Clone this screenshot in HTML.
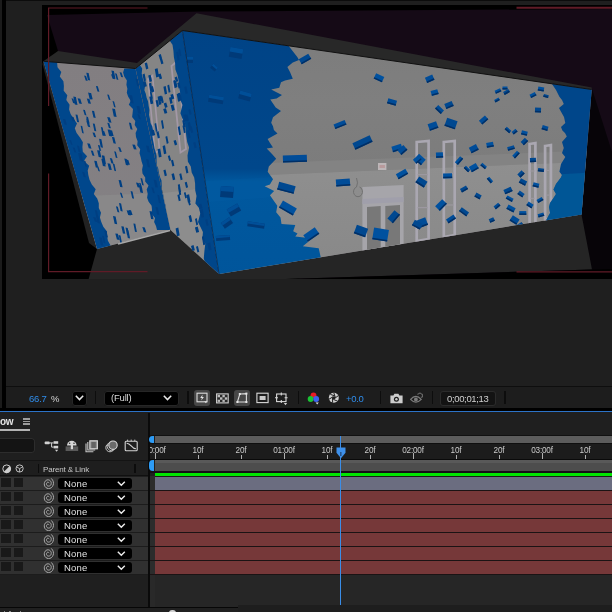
<!DOCTYPE html>
<html><head><meta charset="utf-8"><title>AE</title>
<style>
html,body{margin:0;padding:0;background:#1f1f1f;}
html{overflow:hidden;width:612px;height:612px;}
body{width:612px;height:612px;overflow:hidden;position:relative;font-family:"Liberation Sans",sans-serif;}
.abs{position:absolute;}
.txt{font-family:"Liberation Sans",sans-serif;line-height:1.15;white-space:nowrap;will-change:transform;}
.dd{background:#000;border-radius:3px;box-shadow:inset 0 0 0 1px #262626;}
.sep{width:1.3px;background:#0d0d0d;}
</style></head><body>
<div style="position:absolute;left:0;top:0;width:612px;height:612px;overflow:hidden;background:#1f1f1f">
<svg width="612" height="386" viewBox="0 0 612 386" style="position:absolute;left:0;top:0">
<defs>
<linearGradient id="gw" x1="0" y1="0" x2="0" y2="1"><stop offset="0" stop-color="#7c7c7c"/><stop offset="0.3" stop-color="#7f7f7f"/><stop offset="0.56" stop-color="#7c7c7c"/><stop offset="1" stop-color="#7c7c7c"/></linearGradient>
<linearGradient id="gl" x1="0" y1="0" x2="0" y2="1"><stop offset="0" stop-color="#8f8f8f"/><stop offset="1" stop-color="#878787"/></linearGradient>
<linearGradient id="bl" x1="0" y1="0" x2="0" y2="1"><stop offset="0" stop-color="#004386"/><stop offset="0.55" stop-color="#00478b"/><stop offset="0.60" stop-color="#00589e"/><stop offset="1" stop-color="#00559b"/></linearGradient>
<linearGradient id="lw" x1="0" y1="0" x2="0" y2="1"><stop offset="0" stop-color="#827e81"/><stop offset="1" stop-color="#848184"/></linearGradient>
<clipPath id="cfw"><polygon points="182.4,30.5 591.7,89.5 581.5,214.5 219.0,274.0"/></clipPath>
<clipPath id="ccomp"><rect x="42" y="5" width="570" height="274"/></clipPath>
</defs>
<rect x="0" y="0" width="612" height="386" fill="#1f1f1f"/>
<rect x="0" y="0" width="612" height="1" fill="#0c0c0c"/>
<rect x="0" y="0" width="2" height="386" fill="#1b1b1b"/>
<rect x="2" y="0" width="4" height="386" fill="#000"/>
<rect x="42" y="5" width="570" height="274" fill="#000"/>
<g clip-path="url(#ccomp)">
<polygon points="47.0,15.0 200.0,11.5 612.0,9.0 612.0,279.0 300.0,279.0 58.0,51.0" fill="#150a16"/>
<polygon points="591.7,88.0 612.0,152.0 612.0,279.0 575.0,279.0 581.0,214.0" fill="#070408"/>
<polygon points="97.0,249.0 88.5,279.5 270.0,279.5 592.0,269.5 581.5,214.5 219.0,274.0 170.5,230.0" fill="#252525"/>
<polygon points="260.0,280.0 270.0,279.5 592.0,269.5 612.0,269.0 612.0,281.0 260.0,281.0" fill="#000"/>
<polygon points="43.4,61.3 58.0,51.0 137.0,63.0 196.5,13.2 591.7,87.6 591.7,89.5 182.4,30.5 135.5,68.5" fill="#282828"/>
<polygon points="43.4,61.3 97.0,249.0 89.0,243.0 42.5,64.0" fill="#222222"/>
<polygon points="43.4,61.3 135.5,68.5 170.5,230.0 97.0,249.0" fill="url(#lw)"/>
<polygon points="135.5,68.5 182.4,30.5 219.0,274.0 170.5,230.0" fill="#858585"/>
<polygon points="82.0,196.0 163.0,193.0 170.5,230.0 97.0,249.0" fill="#8c8c8c" opacity="0.7"/>
<polygon points="163.0,193.0 206.0,188.0 219.0,274.0 170.5,230.0" fill="#909090" opacity="0.7"/>
<polygon points="148.0,79.0 152.5,75.5 159.5,150.0 155.0,153.0" fill="none" stroke="#a398a6" stroke-width="1.6"/>
<polygon points="171.5,66.0 177.5,61.0 186.0,149.0 180.5,152.5" fill="none" stroke="#a398a6" stroke-width="1.8"/>
<clipPath id="clw"><polygon points="43.4,61.3 135.5,68.5 170.5,230.0 97.0,249.0"/></clipPath>
<clipPath id="cmw"><polygon points="135.5,68.5 182.4,30.5 219.0,274.0 170.5,230.0"/></clipPath>
<polygon clip-path="url(#clw)" points="43.4,61.3 57.0,61.3 57.5,67.2 61.3,71.9 59.8,76.6 63.4,81.3 63.9,86.0 63.7,90.7 67.3,95.3 66.3,100.0 69.6,104.7 69.1,109.4 70.6,114.1 73.6,118.8 77.0,123.5 74.8,128.2 76.6,132.9 80.0,137.6 82.9,142.3 82.4,147.0 82.8,151.7 87.1,156.3 83.8,161.0 89.2,165.7 87.7,170.4 88.3,175.1 89.5,179.8 91.8,184.5 95.7,189.2 93.8,193.9 97.2,198.6 98.8,203.3 98.8,208.0 101.0,212.7 99.9,217.4 101.3,222.0 103.3,226.7 107.0,231.4 107.1,236.1 107.9,240.8 110.6,245.5 111.3,250.2 97.0,249.0" fill="#00478c"/>
<polygon clip-path="url(#clw)" points="135.5,68.5 170.5,230.0 157.0,230.0 156.0,226.0 154.1,221.9 155.0,217.9 151.6,213.8 152.0,209.8 151.6,205.8 148.6,201.7 147.1,197.7 147.7,193.7 146.7,189.6 148.5,185.6 145.2,181.6 145.2,177.5 142.5,173.5 142.1,169.4 142.9,165.4 141.6,161.4 140.7,157.3 139.5,153.3 140.2,149.2 137.2,145.2 137.6,141.2 136.0,137.1 135.6,133.1 137.3,129.1 134.7,125.0 135.3,121.0 132.1,116.9 132.6,112.9 133.0,108.9 128.8,104.8 130.7,100.8 128.2,96.8 126.8,92.7 127.4,88.7 126.4,84.7 126.9,80.6 124.3,76.6 123.1,72.5 124.3,68.5" fill="#00478c"/>
<polygon clip-path="url(#cmw)" points="135.5,68.5 140.1,65.3 142.2,68.4 141.7,73.5 142.6,77.5 143.6,81.4 145.2,84.9 144.4,90.2 145.8,93.8 146.7,97.9 148.1,101.6 148.6,105.8 149.4,109.9 149.0,114.9 149.9,118.8 150.5,123.1 152.3,126.5 153.1,130.6 152.2,135.9 153.0,140.0 153.8,144.1 154.5,148.2 155.7,152.0 156.6,156.0 156.6,160.7 156.8,165.2 158.3,168.8 158.9,173.0 160.0,176.9 161.5,180.5 161.7,185.0 162.0,189.4 162.9,193.4 163.8,197.5 164.4,201.7 165.6,205.5 166.1,209.8 167.0,213.8 167.9,217.9 168.8,221.9 169.6,226.0 170.5,230.0 170.5,230.0" fill="#00478c"/>
<polygon clip-path="url(#cmw)" points="182.4,30.5 219.0,274.0 210.0,280.8 209.4,274.4 206.8,269.6 205.2,264.0 203.8,258.3 204.4,251.0 205.3,243.7 202.4,239.0 202.9,231.9 200.5,226.9 198.0,222.0 200.3,213.5 198.8,207.8 195.4,203.6 196.5,196.1 195.2,190.2 195.1,183.6 194.2,177.5 191.7,172.5 190.8,166.4 187.9,161.8 187.5,155.4 189.1,147.4 187.2,142.0 186.3,136.0 185.6,129.7 185.0,123.4 182.4,118.6 180.4,113.3 182.5,104.9 180.3,99.8 180.2,93.1 179.1,87.2 178.6,80.7 177.5,74.9 175.4,69.6 175.1,63.1 173.9,57.2 173.4,50.8 172.5,44.7 169.4,40.2" fill="#00468a"/>
<path d="M115.9,206.3l1.9,0.4l1.6,5.8l-1.9,-0.4zM149.5,211.1l2.5,0.4l1.6,7.8l-2.5,-0.4zM83.8,160.6l1.6,0.4l1.6,5.9l-1.6,-0.4zM62.9,118.9l2.4,0.4l1.6,5.5l-2.4,-0.4zM83.1,109.7l1.8,0.4l1.6,5.3l-1.8,-0.4zM125.5,227.6l2.2,0.4l1.6,7.9l-2.2,-0.4zM128.6,209.9l2.4,0.4l1.6,4.8l-2.4,-0.4zM155.5,206.9l2.2,0.4l1.6,7.5l-2.2,-0.4zM94.9,210.1l2.1,0.4l1.6,8.4l-2.1,-0.4zM102.1,235.7l1.8,0.4l1.6,7.4l-1.8,-0.4zM73.3,96.5l2.6,0.4l1.6,8.1l-2.6,-0.4zM96.8,166.0l1.6,0.4l1.6,5.0l-1.6,-0.4zM115.3,233.4l2.6,0.4l1.6,6.2l-2.6,-0.4zM86.4,121.3l2.3,0.4l1.6,5.5l-2.3,-0.4zM87.2,143.3l2.7,0.4l1.6,5.0l-2.7,-0.4zM97.1,150.2l2.7,0.4l1.6,6.8l-2.7,-0.4zM104.2,230.6l2.2,0.4l1.6,6.5l-2.2,-0.4zM115.0,73.3l1.8,0.4l1.6,6.3l-1.8,-0.4zM78.1,152.9l2.3,0.4l1.6,7.4l-2.3,-0.4zM94.2,160.7l2.5,0.4l1.6,6.7l-2.5,-0.4zM86.1,118.5l2.2,0.4l1.6,7.6l-2.2,-0.4zM119.0,203.0l2.1,0.4l1.6,8.1l-2.1,-0.4zM124.3,158.5l2.4,0.4l1.6,6.5l-2.4,-0.4zM107.5,163.3l2.7,0.4l1.6,6.4l-2.7,-0.4zM133.4,223.4l1.9,0.4l1.6,8.3l-1.9,-0.4zM118.7,235.1l1.8,0.4l1.6,7.9l-1.8,-0.4zM72.8,147.4l1.9,0.4l1.6,4.8l-1.9,-0.4zM142.3,227.0l2.5,0.4l1.6,5.1l-2.5,-0.4zM129.3,95.0l2.8,0.4l1.6,8.0l-2.8,-0.4zM101.8,155.3l2.6,0.4l1.6,8.5l-2.6,-0.4zM77.0,145.5l2.0,0.4l1.6,6.6l-2.0,-0.4zM80.6,125.7l1.6,0.4l1.6,7.4l-1.6,-0.4zM118.2,147.1l2.0,0.4l1.6,4.6l-2.0,-0.4zM125.5,159.6l2.8,0.4l1.6,4.8l-2.8,-0.4zM71.0,116.5l2.5,0.4l1.6,4.7l-2.5,-0.4zM88.4,92.7l2.7,0.4l1.6,6.2l-2.7,-0.4zM119.9,192.6l1.7,0.4l1.6,4.9l-1.7,-0.4zM132.3,144.4l2.7,0.4l1.6,4.8l-2.7,-0.4zM126.6,210.3l2.6,0.4l1.6,4.8l-2.6,-0.4zM107.6,129.4l2.7,0.4l1.6,6.7l-2.7,-0.4zM88.1,92.6l1.9,0.4l1.6,6.6l-1.9,-0.4zM71.5,98.3l1.8,0.4l1.6,4.7l-1.8,-0.4zM92.8,123.4l1.9,0.4l1.6,7.5l-1.9,-0.4zM112.5,101.1l1.6,0.4l1.6,5.9l-1.6,-0.4zM86.3,72.7l2.3,0.4l1.6,7.4l-2.3,-0.4zM79.9,153.1l1.7,0.4l1.6,8.2l-1.7,-0.4zM146.0,145.6l2.6,0.4l1.6,6.5l-2.6,-0.4zM101.3,158.7l2.8,0.4l1.6,7.3l-2.8,-0.4zM96.0,215.7l2.4,0.4l1.6,7.3l-2.4,-0.4zM102.5,130.8l1.8,0.4l1.6,4.7l-1.8,-0.4zM86.8,98.6l2.6,0.4l1.6,4.8l-2.6,-0.4zM151.4,187.3l1.9,0.4l1.6,5.6l-1.9,-0.4zM90.8,150.4l2.1,0.4l1.6,5.1l-2.1,-0.4zM92.5,132.4l2.1,0.4l1.6,4.5l-2.1,-0.4zM109.8,158.0l2.2,0.4l1.6,5.3l-2.2,-0.4zM69.4,139.9l1.6,0.4l1.6,4.7l-1.6,-0.4zM91.9,110.7l2.2,0.4l1.6,6.8l-2.2,-0.4zM138.8,185.1l2.7,0.4l1.6,7.4l-2.7,-0.4zM100.9,127.1l1.8,0.4l1.6,8.4l-1.8,-0.4zM136.0,182.6l2.6,0.4l1.6,4.7l-2.6,-0.4zM153.7,179.8l2.6,0.4l1.6,7.4l-2.6,-0.4zM113.0,216.1l2.6,0.4l1.6,7.7l-2.6,-0.4zM121.3,226.2l2.4,0.4l1.6,7.2l-2.4,-0.4zM84.1,75.5l2.0,0.4l1.6,5.0l-2.0,-0.4zM118.6,179.9l2.4,0.4l1.6,7.0l-2.4,-0.4zM111.4,70.6l2.5,0.4l1.6,7.7l-2.5,-0.4zM112.8,163.7l1.7,0.4l1.6,7.1l-1.7,-0.4zM137.4,114.1l1.9,0.4l1.6,4.8l-1.9,-0.4zM136.6,105.9l2.8,0.4l1.6,7.5l-2.8,-0.4zM111.9,136.9l2.4,0.4l1.6,6.4l-2.4,-0.4zM140.5,178.0l1.7,0.4l1.6,7.1l-1.7,-0.4zM75.5,114.4l2.0,0.4l1.6,7.5l-2.0,-0.4zM119.6,72.2l1.9,0.4l1.6,4.7l-1.9,-0.4zM130.6,191.1l1.9,0.4l1.6,7.2l-1.9,-0.4zM114.2,151.3l1.7,0.4l1.6,6.4l-1.7,-0.4zM107.2,117.0l2.7,0.4l1.6,5.3l-2.7,-0.4zM82.1,171.8l2.2,0.4l1.6,5.1l-2.2,-0.4zM146.1,159.0l2.4,0.4l1.6,8.0l-2.4,-0.4zM111.0,74.3l2.2,0.4l1.6,4.5l-2.2,-0.4zM107.3,122.8l2.0,0.4l1.6,5.1l-2.0,-0.4zM93.2,217.0l2.5,0.4l1.6,4.5l-2.5,-0.4zM157.3,194.8l1.9,0.4l1.6,8.1l-1.9,-0.4zM99.1,138.8l2.3,0.4l1.6,8.5l-2.3,-0.4zM97.9,144.9l1.7,0.4l1.6,5.6l-1.7,-0.4zM86.2,116.5l1.8,0.4l1.6,6.5l-1.8,-0.4zM99.2,237.3l2.6,0.4l1.6,8.0l-2.6,-0.4zM126.2,229.8l2.3,0.4l1.6,8.3l-2.3,-0.4zM135.6,78.7l2.1,0.4l1.6,7.4l-2.1,-0.4zM139.0,182.8l1.7,0.4l1.6,5.6l-1.7,-0.4zM109.6,130.1l2.5,0.4l1.6,5.7l-2.5,-0.4zM128.9,122.6l2.1,0.4l1.6,6.7l-2.1,-0.4zM77.6,98.3l2.7,0.4l1.6,5.3l-2.7,-0.4zM112.2,108.5l2.8,0.4l1.6,8.1l-2.8,-0.4zM107.2,94.4l1.7,0.4l1.6,5.3l-1.7,-0.4zM95.9,85.9l1.9,0.4l1.6,5.5l-1.9,-0.4z" fill="#003f82"/>
<path d="M171.0,160.6l2.0,-0.8l1.4,6.0l-2.0,0.8zM177.8,184.8l1.9,-0.8l1.4,8.0l-1.9,0.8zM160.3,97.1l2.1,-0.8l1.4,6.1l-2.1,0.8zM201.9,236.8l1.9,-0.8l1.4,8.4l-1.9,0.8zM148.2,75.5l2.4,-0.8l1.4,6.6l-2.4,0.8zM188.6,215.9l2.3,-0.8l1.4,6.3l-2.3,0.8zM188.4,109.9l1.9,-0.8l1.4,5.0l-1.9,0.8zM187.7,200.7l1.7,-0.8l1.4,4.9l-1.7,0.8zM179.3,174.1l1.9,-0.8l1.4,6.1l-1.9,0.8zM162.6,146.0l2.4,-0.8l1.4,8.3l-2.4,0.8zM157.6,96.8l2.4,-0.8l1.4,8.3l-2.4,0.8zM177.4,195.1l1.9,-0.8l1.4,6.2l-1.9,0.8zM165.4,136.7l1.8,-0.8l1.4,7.2l-1.8,0.8zM199.8,210.0l1.8,-0.8l1.4,6.5l-1.8,0.8zM177.2,83.1l2.1,-0.8l1.4,5.4l-2.1,0.8zM151.0,130.5l2.8,-0.8l1.4,5.4l-2.8,0.8zM207.4,243.2l2.8,-0.8l1.4,7.4l-2.8,0.8zM189.8,127.1l2.0,-0.8l1.4,6.0l-2.0,0.8zM161.0,120.8l1.7,-0.8l1.4,8.3l-1.7,0.8zM154.5,123.8l1.6,-0.8l1.4,8.1l-1.6,0.8zM196.0,246.7l1.9,-0.8l1.4,5.9l-1.9,0.8zM163.7,103.4l2.5,-0.8l1.4,4.5l-2.5,0.8zM157.5,149.3l2.7,-0.8l1.4,8.3l-2.7,0.8zM169.0,97.7l2.2,-0.8l1.4,6.2l-2.2,0.8zM200.2,209.9l2.5,-0.8l1.4,7.8l-2.5,0.8zM185.5,115.4l2.0,-0.8l1.4,5.8l-2.0,0.8zM158.5,54.9l2.3,-0.8l1.4,4.6l-2.3,0.8zM159.9,59.3l2.2,-0.8l1.4,4.9l-2.2,0.8zM193.2,142.8l2.1,-0.8l1.4,5.4l-2.1,0.8zM186.5,195.0l2.6,-0.8l1.4,7.5l-2.6,0.8zM182.5,125.8l1.8,-0.8l1.4,7.5l-1.8,0.8zM158.6,96.4l2.7,-0.8l1.4,5.1l-2.7,0.8zM183.4,115.1l2.8,-0.8l1.4,6.1l-2.8,0.8zM178.0,93.2l2.4,-0.8l1.4,7.7l-2.4,0.8zM175.6,228.4l2.7,-0.8l1.4,7.9l-2.7,0.8zM148.9,83.6l2.3,-0.8l1.4,8.4l-2.3,0.8zM184.7,182.6l2.0,-0.8l1.4,5.4l-2.0,0.8zM150.6,86.9l2.3,-0.8l1.4,5.5l-2.3,0.8zM163.4,86.8l2.3,-0.8l1.4,7.7l-2.3,0.8zM144.7,63.3l2.3,-0.8l1.4,6.1l-2.3,0.8zM170.7,105.2l2.7,-0.8l1.4,5.7l-2.7,0.8zM163.4,170.3l2.1,-0.8l1.4,5.9l-2.1,0.8zM167.3,85.4l1.8,-0.8l1.4,7.4l-1.8,0.8zM174.6,77.4l2.3,-0.8l1.4,4.6l-2.3,0.8zM167.8,156.0l1.9,-0.8l1.4,5.1l-1.9,0.8zM154.8,69.1l2.8,-0.8l1.4,8.3l-2.8,0.8zM176.2,52.3l2.1,-0.8l1.4,8.2l-2.1,0.8zM156.4,131.9l2.1,-0.8l1.4,6.6l-2.1,0.8zM149.2,96.8l2.7,-0.8l1.4,7.4l-2.7,0.8zM185.0,166.5l2.0,-0.8l1.4,7.0l-2.0,0.8zM171.5,174.0l2.4,-0.8l1.4,6.2l-2.4,0.8zM173.5,140.8l2.3,-0.8l1.4,4.6l-2.3,0.8zM176.7,94.1l2.5,-0.8l1.4,7.6l-2.5,0.8zM174.4,81.3l1.7,-0.8l1.4,6.4l-1.7,0.8zM178.3,49.4l1.7,-0.8l1.4,7.0l-1.7,0.8zM195.0,218.9l1.7,-0.8l1.4,6.5l-1.7,0.8zM177.8,126.9l1.8,-0.8l1.4,8.3l-1.8,0.8zM194.9,227.4l2.8,-0.8l1.4,5.3l-2.8,0.8zM155.6,100.5l2.0,-0.8l1.4,6.5l-2.0,0.8zM142.8,81.9l2.7,-0.8l1.4,5.1l-2.7,0.8zM191.0,245.9l2.5,-0.8l1.4,5.2l-2.5,0.8zM187.7,122.7l2.3,-0.8l1.4,8.0l-2.3,0.8zM187.2,130.7l1.9,-0.8l1.4,7.7l-1.9,0.8zM173.2,80.7l1.7,-0.8l1.4,7.5l-1.7,0.8zM183.9,192.7l1.6,-0.8l1.4,5.8l-1.6,0.8zM142.5,74.4l2.1,-0.8l1.4,7.0l-2.1,0.8zM149.9,92.3l1.6,-0.8l1.4,7.1l-1.6,0.8zM184.2,87.0l2.2,-0.8l1.4,7.0l-2.2,0.8zM158.3,74.3l2.4,-0.8l1.4,4.9l-2.4,0.8zM205.3,219.9l1.9,-0.8l1.4,6.1l-1.9,0.8zM182.2,120.6l2.1,-0.8l1.4,7.1l-2.1,0.8zM170.4,94.7l2.5,-0.8l1.4,4.7l-2.5,0.8zM178.0,187.6l1.8,-0.8l1.4,7.8l-1.8,0.8zM163.2,109.1l2.7,-0.8l1.4,4.7l-2.7,0.8zM198.7,204.5l2.6,-0.8l1.4,4.5l-2.6,0.8z" fill="#003f82"/>
<g clip-path="url(#cfw)">
<rect x="180" y="25" width="420" height="255" fill="url(#gw)"/>
<polygon points="180.0,166.4 600.0,150.3 600.0,161.3 180.0,178.4" fill="#838383"/>
<polygon points="180.0,178.4 600.0,161.3 600.0,290.0 180.0,290.0" fill="url(#gl)"/>
<polygon points="416.7,142.0 428.6,141.0 428.6,239.0 416.7,241.0" fill="none" stroke="#aaa7b1" stroke-width="2.7"/>
<rect x="417.6" y="174.0" width="10.1" height="1.2" fill="#9c98a0"/>
<rect x="417.6" y="207.0" width="10.1" height="1.2" fill="#9c98a0"/>
<polygon points="443.8,142.0 454.7,141.0 454.7,235.0 443.8,237.0" fill="none" stroke="#aaa7b1" stroke-width="2.7"/>
<rect x="444.7" y="172.7" width="9.1" height="1.2" fill="#9c98a0"/>
<rect x="444.7" y="204.4" width="9.1" height="1.2" fill="#9c98a0"/>
<polygon points="529.6,144.0 535.4,143.0 535.4,224.0 529.6,226.0" fill="none" stroke="#aaa7b1" stroke-width="2.7"/>
<rect x="530.5" y="170.4" width="4.0" height="1.2" fill="#9c98a0"/>
<rect x="530.5" y="197.8" width="4.0" height="1.2" fill="#9c98a0"/>
<polygon points="545.1,146.0 550.9,145.0 550.9,218.0 545.1,220.0" fill="none" stroke="#aaa7b1" stroke-width="2.7"/>
<rect x="546.0" y="169.8" width="4.0" height="1.2" fill="#9c98a0"/>
<rect x="546.0" y="194.5" width="4.0" height="1.2" fill="#9c98a0"/>
<polygon points="362.4,187.0 403.6,185.0 403.6,247.0 362.4,253.0" fill="#a6a5aa"/>
<polygon points="362.4,199.0 403.6,197.0 403.6,202.0 362.4,204.0" fill="#a09fab"/>
<polygon points="367.0,207.0 380.7,206.0 380.7,249.0 367.0,251.0" fill="#787878"/>
<polygon points="385.3,206.0 400.0,205.0 400.0,246.0 385.3,248.5" fill="#787878"/>
<rect x="378" y="163" width="8.4" height="7" fill="#bdb6b8"/><rect x="379.5" y="165" width="5.4" height="3" fill="#b89a9c"/>
<path d="M356.5,178 q2,5 0,9 a4.5,5 0 1 0 3,0" fill="none" stroke="#707070" stroke-width="1"/>
<clipPath id="cbl"><polygon points="180.0,20.0 288.3,45.5 297.3,57.1 299.0,60.0 292.8,62.5 287.4,67.0 290.0,72.0 292.8,78.7 285.0,80.5 281.0,82.3 279.3,87.7 271.2,89.5 277.0,92.5 282.0,94.9 276.6,98.5 270.3,99.4 275.7,107.4 281.0,111.0 273.0,117.3 271.2,122.7 273.0,126.3 273.9,130.0 277.5,133.5 267.6,138.9 270.0,143.0 273.0,147.4 266.7,148.5 272.0,154.0 276.2,158.7 268.8,166.5 267.7,171.8 273.0,179.3 269.9,184.6 264.6,186.3 274.1,191.0 269.9,195.2 277.3,205.8 276.2,212.2 280.5,217.5 281.5,223.9 295.3,224.9 293.2,231.3 297.5,233.4 295.3,236.6 306.0,237.7 308.0,241.9 302.8,246.2 318.7,248.3 320.8,257.5 321.0,262.0 180.0,290.0"/></clipPath>
<polygon points="180.0,20.0 288.3,45.5 297.3,57.1 299.0,60.0 292.8,62.5 287.4,67.0 290.0,72.0 292.8,78.7 285.0,80.5 281.0,82.3 279.3,87.7 271.2,89.5 277.0,92.5 282.0,94.9 276.6,98.5 270.3,99.4 275.7,107.4 281.0,111.0 273.0,117.3 271.2,122.7 273.0,126.3 273.9,130.0 277.5,133.5 267.6,138.9 270.0,143.0 273.0,147.4 266.7,148.5 272.0,154.0 276.2,158.7 268.8,166.5 267.7,171.8 273.0,179.3 269.9,184.6 264.6,186.3 274.1,191.0 269.9,195.2 277.3,205.8 276.2,212.2 280.5,217.5 281.5,223.9 295.3,224.9 293.2,231.3 297.5,233.4 295.3,236.6 306.0,237.7 308.0,241.9 302.8,246.2 318.7,248.3 320.8,257.5 321.0,262.0 180.0,290.0" fill="url(#bl)"/>
<polygon clip-path="url(#cbl)" points="180.0,182.4 290.0,175.9 290.0,195.9 180.0,204.4" fill="#0a66b0" opacity="0.15"/>
<clipPath id="cbr"><polygon points="552.0,80.0 552.0,84.0 556.0,90.0 559.4,96.8 562.0,100.0 563.8,104.0 559.0,108.0 560.9,111.5 564.0,117.0 565.3,123.0 561.0,127.0 562.4,130.6 565.0,133.0 566.8,136.5 562.0,142.0 563.8,148.0 562.0,153.0 565.3,157.0 561.0,164.0 559.4,171.8 562.0,175.0 560.9,177.6 556.0,184.0 553.5,189.4 556.0,194.0 553.5,198.0 550.0,203.0 549.0,207.0 550.0,213.0 546.0,220.5 546.0,225.0 600.0,225.0 600.0,80.0"/></clipPath>
<polygon points="552.0,80.0 552.0,84.0 556.0,90.0 559.4,96.8 562.0,100.0 563.8,104.0 559.0,108.0 560.9,111.5 564.0,117.0 565.3,123.0 561.0,127.0 562.4,130.6 565.0,133.0 566.8,136.5 562.0,142.0 563.8,148.0 562.0,153.0 565.3,157.0 561.0,164.0 559.4,171.8 562.0,175.0 560.9,177.6 556.0,184.0 553.5,189.4 556.0,194.0 553.5,198.0 550.0,203.0 549.0,207.0 550.0,213.0 546.0,220.5 546.0,225.0 600.0,225.0 600.0,80.0" fill="#00468a"/>
<polygon clip-path="url(#cbr)" points="545.0,175.0 600.0,172.0 600.0,225.0 545.0,225.0" fill="#00609f" opacity="0.6"/>
<g transform="translate(379.0,77.8) rotate(25)"><rect x="-4.5" y="-2.9" width="9.0" height="5.8" fill="#00519f"/><rect x="-4.5" y="1.4" width="9.0" height="1.5" fill="#002f66"/></g>
<g transform="translate(392.0,102.0) rotate(16)"><rect x="-4.5" y="-2.5" width="9.0" height="5.0" fill="#004c98"/><rect x="-4.5" y="1.0" width="9.0" height="1.5" fill="#002f66"/></g>
<g transform="translate(429.7,78.8) rotate(-24)"><rect x="-4.0" y="-2.8" width="8.0" height="5.5" fill="#004c98"/><rect x="-4.0" y="1.3" width="8.0" height="1.5" fill="#002f66"/></g>
<g transform="translate(434.6,92.5) rotate(-16)"><rect x="-3.5" y="-2.5" width="7.0" height="5.1" fill="#00519f"/><rect x="-3.5" y="1.0" width="7.0" height="1.5" fill="#002f66"/></g>
<g transform="translate(439.5,109.5) rotate(44)"><rect x="-4.0" y="-2.3" width="8.0" height="4.6" fill="#004c98"/><rect x="-4.0" y="0.8" width="8.0" height="1.5" fill="#002f66"/></g>
<g transform="translate(449.0,105.0) rotate(-23)"><rect x="-4.0" y="-2.7" width="8.0" height="5.3" fill="#004890"/><rect x="-4.0" y="1.2" width="8.0" height="1.5" fill="#002f66"/></g>
<g transform="translate(451.0,123.5) rotate(19)"><rect x="-5.5" y="-4.3" width="11.0" height="8.5" fill="#004890"/><rect x="-5.5" y="2.8" width="11.0" height="1.5" fill="#002f66"/></g>
<g transform="translate(433.0,126.0) rotate(-20)"><rect x="-4.5" y="-3.5" width="9.0" height="7.0" fill="#004c98"/><rect x="-4.5" y="2.0" width="9.0" height="1.5" fill="#002f66"/></g>
<g transform="translate(483.6,120.0) rotate(-41)"><rect x="-4.0" y="-2.6" width="8.0" height="5.2" fill="#004c98"/><rect x="-4.0" y="1.1" width="8.0" height="1.5" fill="#002f66"/></g>
<g transform="translate(498.0,91.0) rotate(-24)"><rect x="-3.0" y="-1.7" width="6.0" height="3.4" fill="#00519f"/><rect x="-3.0" y="0.2" width="6.0" height="1.5" fill="#002f66"/></g>
<g transform="translate(506.5,92.0) rotate(-30)"><rect x="-3.0" y="-1.6" width="6.0" height="3.3" fill="#004890"/><rect x="-3.0" y="0.1" width="6.0" height="1.5" fill="#002f66"/></g>
<g transform="translate(340.0,124.5) rotate(-22)"><rect x="-6.0" y="-2.5" width="12.0" height="5.0" fill="#004c98"/><rect x="-6.0" y="1.0" width="12.0" height="1.5" fill="#002f66"/></g>
<g transform="translate(362.5,142.5) rotate(-25)"><rect x="-9.5" y="-3.5" width="19.0" height="7.0" fill="#004890"/><rect x="-9.5" y="2.0" width="19.0" height="1.5" fill="#002f66"/></g>
<g transform="translate(397.0,148.0) rotate(-17)"><rect x="-5.0" y="-2.9" width="10.0" height="5.7" fill="#00519f"/><rect x="-5.0" y="1.4" width="10.0" height="1.5" fill="#002f66"/></g>
<g transform="translate(420.0,159.5) rotate(42)"><rect x="-4.5" y="-3.6" width="9.0" height="7.2" fill="#00519f"/><rect x="-4.5" y="2.1" width="9.0" height="1.5" fill="#002f66"/></g>
<g transform="translate(439.5,155.0) rotate(-3)"><rect x="-3.5" y="-2.6" width="7.0" height="5.3" fill="#00519f"/><rect x="-3.5" y="1.1" width="7.0" height="1.5" fill="#002f66"/></g>
<g transform="translate(459.0,160.5) rotate(-49)"><rect x="-4.0" y="-2.0" width="8.0" height="4.1" fill="#00519f"/><rect x="-4.0" y="0.5" width="8.0" height="1.5" fill="#002f66"/></g>
<g transform="translate(473.8,148.7) rotate(-27)"><rect x="-4.0" y="-3.1" width="8.0" height="6.1" fill="#004c98"/><rect x="-4.0" y="1.6" width="8.0" height="1.5" fill="#002f66"/></g>
<g transform="translate(490.0,144.8) rotate(-11)"><rect x="-3.5" y="-2.4" width="7.0" height="4.7" fill="#00519f"/><rect x="-3.5" y="0.9" width="7.0" height="1.5" fill="#002f66"/></g>
<g transform="translate(508.0,130.0) rotate(41)"><rect x="-3.0" y="-1.6" width="6.0" height="3.3" fill="#004c98"/><rect x="-3.0" y="0.1" width="6.0" height="1.5" fill="#002f66"/></g>
<g transform="translate(514.6,131.7) rotate(-39)"><rect x="-2.5" y="-1.7" width="5.0" height="3.4" fill="#004c98"/><rect x="-2.5" y="0.2" width="5.0" height="1.5" fill="#002f66"/></g>
<g transform="translate(511.0,148.0) rotate(-16)"><rect x="-3.5" y="-1.9" width="7.0" height="3.8" fill="#004c98"/><rect x="-3.5" y="0.4" width="7.0" height="1.5" fill="#002f66"/></g>
<g transform="translate(516.0,154.6) rotate(-47)"><rect x="-3.5" y="-1.9" width="7.0" height="3.8" fill="#00519f"/><rect x="-3.5" y="0.4" width="7.0" height="1.5" fill="#002f66"/></g>
<g transform="translate(524.4,133.0) rotate(13)"><rect x="-3.0" y="-2.1" width="6.0" height="4.3" fill="#00519f"/><rect x="-3.0" y="0.6" width="6.0" height="1.5" fill="#002f66"/></g>
<g transform="translate(524.4,141.5) rotate(-45)"><rect x="-3.0" y="-2.3" width="6.0" height="4.5" fill="#004890"/><rect x="-3.0" y="0.8" width="6.0" height="1.5" fill="#002f66"/></g>
<g transform="translate(473.8,167.6) rotate(-30)"><rect x="-4.0" y="-3.1" width="8.0" height="6.3" fill="#00519f"/><rect x="-4.0" y="1.6" width="8.0" height="1.5" fill="#002f66"/></g>
<g transform="translate(483.6,166.0) rotate(39)"><rect x="-3.0" y="-1.6" width="6.0" height="3.1" fill="#00519f"/><rect x="-3.0" y="0.1" width="6.0" height="1.5" fill="#002f66"/></g>
<g transform="translate(467.0,169.0) rotate(44)"><rect x="-3.0" y="-1.6" width="6.0" height="3.2" fill="#004c98"/><rect x="-3.0" y="0.1" width="6.0" height="1.5" fill="#002f66"/></g>
<g transform="translate(402.0,174.0) rotate(-30)"><rect x="-5.5" y="-2.8" width="11.0" height="5.6" fill="#00519f"/><rect x="-5.5" y="1.3" width="11.0" height="1.5" fill="#002f66"/></g>
<g transform="translate(343.0,182.5) rotate(-5)"><rect x="-7.0" y="-3.5" width="14.0" height="7.0" fill="#004c98"/><rect x="-7.0" y="2.0" width="14.0" height="1.5" fill="#002f66"/></g>
<g transform="translate(421.5,182.0) rotate(33)"><rect x="-5.0" y="-3.4" width="10.0" height="6.9" fill="#004890"/><rect x="-5.0" y="1.9" width="10.0" height="1.5" fill="#002f66"/></g>
<g transform="translate(447.6,175.8) rotate(-2)"><rect x="-4.5" y="-2.4" width="9.0" height="4.9" fill="#00519f"/><rect x="-4.5" y="0.9" width="9.0" height="1.5" fill="#002f66"/></g>
<g transform="translate(464.0,189.0) rotate(-30)"><rect x="-3.5" y="-2.1" width="7.0" height="4.2" fill="#004890"/><rect x="-3.5" y="0.6" width="7.0" height="1.5" fill="#002f66"/></g>
<g transform="translate(508.0,190.5) rotate(-24)"><rect x="-4.0" y="-2.4" width="8.0" height="4.8" fill="#004890"/><rect x="-4.0" y="0.9" width="8.0" height="1.5" fill="#002f66"/></g>
<g transform="translate(521.0,174.0) rotate(-45)"><rect x="-3.0" y="-2.2" width="6.0" height="4.4" fill="#004890"/><rect x="-3.0" y="0.7" width="6.0" height="1.5" fill="#002f66"/></g>
<g transform="translate(523.0,182.0) rotate(27)"><rect x="-3.5" y="-2.4" width="7.0" height="4.8" fill="#004890"/><rect x="-3.5" y="0.9" width="7.0" height="1.5" fill="#002f66"/></g>
<g transform="translate(521.0,194.0) rotate(35)"><rect x="-3.0" y="-2.1" width="6.0" height="4.1" fill="#004c98"/><rect x="-3.0" y="0.6" width="6.0" height="1.5" fill="#002f66"/></g>
<g transform="translate(509.7,198.7) rotate(29)"><rect x="-3.5" y="-1.8" width="7.0" height="3.6" fill="#00519f"/><rect x="-3.5" y="0.3" width="7.0" height="1.5" fill="#002f66"/></g>
<g transform="translate(511.0,208.5) rotate(27)"><rect x="-4.0" y="-2.4" width="8.0" height="4.8" fill="#00519f"/><rect x="-4.0" y="0.9" width="8.0" height="1.5" fill="#002f66"/></g>
<g transform="translate(441.0,205.0) rotate(-45)"><rect x="-5.0" y="-3.3" width="10.0" height="6.7" fill="#00519f"/><rect x="-5.0" y="1.8" width="10.0" height="1.5" fill="#002f66"/></g>
<g transform="translate(464.0,211.8) rotate(36)"><rect x="-4.5" y="-2.4" width="9.0" height="4.7" fill="#004890"/><rect x="-4.5" y="0.9" width="9.0" height="1.5" fill="#002f66"/></g>
<g transform="translate(451.0,219.0) rotate(-33)"><rect x="-4.5" y="-2.3" width="9.0" height="4.5" fill="#004c98"/><rect x="-4.5" y="0.8" width="9.0" height="1.5" fill="#002f66"/></g>
<g transform="translate(421.5,223.0) rotate(-21)"><rect x="-5.5" y="-4.0" width="11.0" height="8.0" fill="#004c98"/><rect x="-5.5" y="2.5" width="11.0" height="1.5" fill="#002f66"/></g>
<g transform="translate(393.7,216.7) rotate(-50)"><rect x="-5.5" y="-3.6" width="11.0" height="7.1" fill="#004890"/><rect x="-5.5" y="2.1" width="11.0" height="1.5" fill="#002f66"/></g>
<g transform="translate(361.0,231.0) rotate(20)"><rect x="-6.0" y="-4.5" width="12.0" height="9.0" fill="#004890"/><rect x="-6.0" y="3.0" width="12.0" height="1.5" fill="#002f66"/></g>
<g transform="translate(380.6,234.6) rotate(9)"><rect x="-7.5" y="-5.9" width="15.0" height="11.8" fill="#00519f"/><rect x="-7.5" y="4.4" width="15.0" height="1.5" fill="#002f66"/></g>
<g transform="translate(491.8,220.0) rotate(-24)"><rect x="-2.5" y="-2.0" width="5.0" height="3.9" fill="#004890"/><rect x="-2.5" y="0.5" width="5.0" height="1.5" fill="#002f66"/></g>
<g transform="translate(514.6,220.0) rotate(32)"><rect x="-4.0" y="-3.1" width="8.0" height="6.3" fill="#004c98"/><rect x="-4.0" y="1.6" width="8.0" height="1.5" fill="#002f66"/></g>
<g transform="translate(522.8,213.0) rotate(-0)"><rect x="-3.5" y="-1.9" width="7.0" height="3.7" fill="#00519f"/><rect x="-3.5" y="0.4" width="7.0" height="1.5" fill="#002f66"/></g>
<g transform="translate(294.9,158.6) rotate(-2)"><rect x="-12.0" y="-3.5" width="24.0" height="7.0" fill="#004c98"/><rect x="-12.0" y="2.0" width="24.0" height="1.5" fill="#002f66"/></g>
<g transform="translate(286.4,187.8) rotate(15)"><rect x="-8.5" y="-4.0" width="17.0" height="8.0" fill="#004890"/><rect x="-8.5" y="2.5" width="17.0" height="1.5" fill="#002f66"/></g>
<g transform="translate(287.9,208.0) rotate(30)"><rect x="-8.0" y="-4.0" width="16.0" height="8.0" fill="#00519f"/><rect x="-8.0" y="2.5" width="16.0" height="1.5" fill="#002f66"/></g>
<g transform="translate(311.3,234.5) rotate(-35)"><rect x="-7.0" y="-4.0" width="14.0" height="8.0" fill="#00519f"/><rect x="-7.0" y="2.5" width="14.0" height="1.5" fill="#002f66"/></g>
<g transform="translate(417.3,224.7) rotate(29)"><rect x="-4.5" y="-3.1" width="9.0" height="6.2" fill="#004890"/><rect x="-4.5" y="1.6" width="9.0" height="1.5" fill="#002f66"/></g>
<g transform="translate(417.3,159.5) rotate(-40)"><rect x="-3.5" y="-2.7" width="7.0" height="5.4" fill="#00519f"/><rect x="-3.5" y="1.2" width="7.0" height="1.5" fill="#002f66"/></g>
<g transform="translate(402.4,150.0) rotate(-41)"><rect x="-4.0" y="-3.1" width="8.0" height="6.1" fill="#004c98"/><rect x="-4.0" y="1.6" width="8.0" height="1.5" fill="#002f66"/></g>
<g transform="translate(305.0,59.0) rotate(-30)"><rect x="-5.5" y="-3.0" width="11.0" height="6.0" fill="#004890"/><rect x="-5.5" y="1.5" width="11.0" height="1.5" fill="#002f66"/></g>
<g transform="translate(497.0,100.0) rotate(-29)"><rect x="-2.5" y="-1.4" width="5.0" height="2.9" fill="#00519f"/><rect x="-2.5" y="-0.1" width="5.0" height="1.5" fill="#002f66"/></g>
<g transform="translate(505.0,88.0) rotate(0)"><rect x="-2.5" y="-1.5" width="5.0" height="3.1" fill="#00519f"/><rect x="-2.5" y="0.0" width="5.0" height="1.5" fill="#002f66"/></g>
<g transform="translate(533.0,95.0) rotate(-27)"><rect x="-3.0" y="-1.9" width="6.0" height="3.8" fill="#00519f"/><rect x="-3.0" y="0.4" width="6.0" height="1.5" fill="#002f66"/></g>
<g transform="translate(541.0,89.0) rotate(9)"><rect x="-3.0" y="-2.1" width="6.0" height="4.2" fill="#00519f"/><rect x="-3.0" y="0.6" width="6.0" height="1.5" fill="#002f66"/></g>
<g transform="translate(546.0,96.0) rotate(15)"><rect x="-2.5" y="-1.5" width="5.0" height="3.0" fill="#004890"/><rect x="-2.5" y="0.0" width="5.0" height="1.5" fill="#002f66"/></g>
<g transform="translate(538.0,110.0) rotate(2)"><rect x="-3.0" y="-2.3" width="6.0" height="4.6" fill="#004890"/><rect x="-3.0" y="0.8" width="6.0" height="1.5" fill="#002f66"/></g>
<g transform="translate(545.0,128.0) rotate(16)"><rect x="-3.0" y="-2.2" width="6.0" height="4.3" fill="#004c98"/><rect x="-3.0" y="0.7" width="6.0" height="1.5" fill="#002f66"/></g>
<g transform="translate(533.0,160.0) rotate(-4)"><rect x="-3.0" y="-2.1" width="6.0" height="4.2" fill="#004890"/><rect x="-3.0" y="0.6" width="6.0" height="1.5" fill="#002f66"/></g>
<g transform="translate(541.0,170.0) rotate(8)"><rect x="-3.0" y="-1.6" width="6.0" height="3.2" fill="#004890"/><rect x="-3.0" y="0.1" width="6.0" height="1.5" fill="#002f66"/></g>
<g transform="translate(536.0,185.0) rotate(14)"><rect x="-3.0" y="-2.1" width="6.0" height="4.3" fill="#00519f"/><rect x="-3.0" y="0.6" width="6.0" height="1.5" fill="#002f66"/></g>
<g transform="translate(540.0,200.0) rotate(-31)"><rect x="-3.0" y="-1.8" width="6.0" height="3.5" fill="#00519f"/><rect x="-3.0" y="0.3" width="6.0" height="1.5" fill="#002f66"/></g>
<g transform="translate(530.0,205.0) rotate(33)"><rect x="-3.0" y="-2.1" width="6.0" height="4.1" fill="#00519f"/><rect x="-3.0" y="0.6" width="6.0" height="1.5" fill="#002f66"/></g>
<g transform="translate(520.0,225.0) rotate(-34)"><rect x="-3.0" y="-1.7" width="6.0" height="3.4" fill="#004890"/><rect x="-3.0" y="0.2" width="6.0" height="1.5" fill="#002f66"/></g>
<g transform="translate(500.0,232.0) rotate(10)"><rect x="-2.5" y="-1.5" width="5.0" height="3.0" fill="#004c98"/><rect x="-2.5" y="0.0" width="5.0" height="1.5" fill="#002f66"/></g>
<g transform="translate(541.0,215.0) rotate(-17)"><rect x="-3.0" y="-1.7" width="6.0" height="3.3" fill="#00519f"/><rect x="-3.0" y="0.2" width="6.0" height="1.5" fill="#002f66"/></g>
<g transform="translate(490.0,180.0) rotate(49)"><rect x="-3.0" y="-1.6" width="6.0" height="3.3" fill="#00519f"/><rect x="-3.0" y="0.1" width="6.0" height="1.5" fill="#002f66"/></g>
<g transform="translate(497.0,206.0) rotate(-40)"><rect x="-3.0" y="-1.8" width="6.0" height="3.7" fill="#004c98"/><rect x="-3.0" y="0.3" width="6.0" height="1.5" fill="#002f66"/></g>
<g transform="translate(478.0,196.0) rotate(29)"><rect x="-3.0" y="-2.2" width="6.0" height="4.3" fill="#004890"/><rect x="-3.0" y="0.7" width="6.0" height="1.5" fill="#002f66"/></g>
<g transform="translate(236.0,53.0) rotate(10)"><rect x="-6.5" y="-5.0" width="13.0" height="10.0" fill="#003a78"/><rect x="-6.5" y="-5.0" width="13.0" height="4.5" fill="#004f98"/></g>
<g transform="translate(214.0,67.7) rotate(40)"><rect x="-3.0" y="-2.5" width="6.0" height="5.0" fill="#003a78"/><rect x="-3.0" y="-2.5" width="6.0" height="2.2" fill="#004f98"/></g>
<g transform="translate(216.0,99.5) rotate(10)"><rect x="-7.5" y="-3.5" width="15.0" height="7.0" fill="#003a78"/><rect x="-7.5" y="-3.5" width="15.0" height="3.1" fill="#004f98"/></g>
<g transform="translate(245.0,96.0) rotate(15)"><rect x="-6.0" y="-4.0" width="12.0" height="8.0" fill="#003a78"/><rect x="-6.0" y="-4.0" width="12.0" height="3.6" fill="#004f98"/></g>
<g transform="translate(190.0,60.0) rotate(0)"><rect x="-3.0" y="-3.0" width="6.0" height="6.0" fill="#003a78"/><rect x="-3.0" y="-3.0" width="6.0" height="2.7" fill="#004f98"/></g>
<g transform="translate(227.0,192.0) rotate(5)"><rect x="-6.5" y="-5.5" width="13.0" height="11.0" fill="#003a78"/><rect x="-6.5" y="-5.5" width="13.0" height="5.0" fill="#004f98"/></g>
<g transform="translate(234.0,210.0) rotate(-30)"><rect x="-6.0" y="-4.0" width="12.0" height="8.0" fill="#003a78"/><rect x="-6.0" y="-4.0" width="12.0" height="3.6" fill="#004f98"/></g>
<g transform="translate(256.0,225.0) rotate(8)"><rect x="-8.5" y="-2.5" width="17.0" height="5.0" fill="#003a78"/><rect x="-8.5" y="-2.5" width="17.0" height="2.2" fill="#004f98"/></g>
<g transform="translate(227.0,223.0) rotate(-35)"><rect x="-5.0" y="-3.5" width="10.0" height="7.0" fill="#003a78"/><rect x="-5.0" y="-3.5" width="10.0" height="3.1" fill="#004f98"/></g>
<g transform="translate(223.0,238.0) rotate(-5)"><rect x="-7.0" y="-2.5" width="14.0" height="5.0" fill="#003a78"/><rect x="-7.0" y="-2.5" width="14.0" height="2.2" fill="#004f98"/></g>
</g>
<line x1="182.4" y1="30.5" x2="219" y2="274" stroke="#03264e" stroke-width="0.8"/>
<polyline points="43.4,61.3 135.5,68.5 182.4,30.5 591.7,89.5" fill="none" stroke="#111" stroke-width="1"/>
<line x1="118" y1="244" x2="170" y2="230.5" stroke="#a8a8a8" stroke-width="1.5"/>
</g>
<g fill="none" stroke="#601b27" stroke-width="1.2">
<polyline points="147.5,8 48.6,8 48.6,106"/>
<polyline points="48.6,173.5 48.6,271.6 147.5,271.6"/>
<line x1="516.5" y1="7.8" x2="612" y2="7.8" stroke-width="2"/>
<line x1="516.5" y1="271.8" x2="612" y2="271.8"/>
</g>
</svg>
<!-- toolbar -->
<div class="abs" style="left:0;top:386px;width:612px;height:1.3px;background:#0e0e0e"></div>
<div class="abs" style="left:0;top:387px;width:612px;height:21px;background:#1d1d1d"></div>
<div class="abs" style="left:0;top:386px;width:2px;height:22px;background:#1b1b1b"></div>
<div class="abs" style="left:2px;top:386px;width:4px;height:22px;background:#000"></div>
<div class="abs" style="left:0;top:408px;width:612px;height:3px;background:#000"></div>
<div class="abs" style="left:0;top:410.8px;width:612px;height:1.7px;background:#2c73c8"></div>

<div class="abs txt" style="left:28.8px;top:393.5px;font-size:9.5px;color:#2f8dec;letter-spacing:-0.2px">66.7</div>
<div class="abs txt" style="left:51.3px;top:393.5px;font-size:9.5px;color:#d4d4d4">%</div>
<div class="abs dd" style="left:72px;top:390.5px;width:15px;height:15.5px"></div>
<svg class="abs" style="left:75px;top:395px" width="9" height="6" viewBox="0 0 9 6"><polyline points="0.8,0.8 4.5,4.6 8.2,0.8" fill="none" stroke="#e8e8e8" stroke-width="1.5"/></svg>
<div class="abs sep" style="left:94.5px;top:391px;height:13px"></div>
<div class="abs dd" style="left:103.5px;top:390.5px;width:75.5px;height:15px"></div>
<div class="abs txt" style="left:110.6px;top:393.1px;font-size:9.5px;color:#d8d8d8;letter-spacing:-0.2px">(Full)</div>
<svg class="abs" style="left:163px;top:395px" width="9" height="6" viewBox="0 0 9 6"><polyline points="0.8,0.8 4.5,4.6 8.2,0.8" fill="none" stroke="#e8e8e8" stroke-width="1.5"/></svg>
<div class="abs sep" style="left:187.3px;top:391px;height:13px"></div>

<!-- toolbar icons -->
<div class="abs" style="left:194.2px;top:390px;width:15.8px;height:15.6px;background:#474747;border-radius:3px"></div>
<svg class="abs" style="left:194px;top:390px" width="16" height="16" viewBox="0 0 16 16"><rect x="3" y="3.2" width="10" height="8.6" fill="none" stroke="#dcdcdc" stroke-width="1.1"/><path d="M8.6,4.6 L6.2,7.9 L7.9,7.9 L7.2,10.6 L9.9,7 L8.2,7 Z" fill="#e6e6e6"/><path d="M10.2,11.2 l3.2,0 l-1.6,2 z" fill="#dcdcdc"/></svg>
<svg class="abs" style="left:216px;top:393px" width="13" height="11" viewBox="0 0 13 11"><rect x="0.6" y="0.9" width="11.6" height="9" fill="#2a2a2a" stroke="#d0d0d0" stroke-width="1.1"/><g fill="#bdbdbd"><rect x="1.6" y="1.9" width="2.4" height="2.4"/><rect x="6.4" y="1.9" width="2.4" height="2.4"/><rect x="4" y="4.3" width="2.4" height="2.4"/><rect x="8.8" y="4.3" width="2.4" height="2.4"/><rect x="1.6" y="6.7" width="2.4" height="2.2"/><rect x="6.4" y="6.7" width="2.4" height="2.2"/></g></svg>
<div class="abs" style="left:234px;top:390px;width:15.8px;height:15.6px;background:#474747;border-radius:3px"></div>
<svg class="abs" style="left:234px;top:390px" width="16" height="16" viewBox="0 0 16 16"><polygon points="5.8,4 12.4,3.6 12.4,12 3.4,12" fill="none" stroke="#dcdcdc" stroke-width="1.1"/><g fill="#e6e6e6"><rect x="4.8" y="3" width="2" height="2"/><rect x="11.4" y="2.6" width="2" height="2"/><rect x="11.4" y="11" width="2" height="2"/><rect x="2.4" y="11" width="2" height="2"/></g></svg>
<svg class="abs" style="left:255.5px;top:392px" width="13" height="12" viewBox="0 0 13 12"><rect x="0.9" y="1.2" width="11.2" height="9.4" fill="none" stroke="#d8d8d8" stroke-width="1.1"/><rect x="3.6" y="4" width="6" height="4" fill="#c8c8c8"/></svg>
<svg class="abs" style="left:274px;top:391.5px" width="15" height="14" viewBox="0 0 15 14"><rect x="2.6" y="2" width="9.4" height="7.6" fill="none" stroke="#d8d8d8" stroke-width="1.1"/><path d="M7.3,0.6v3 M7.3,8v3 M1,5.8h3 M10.6,5.8h3" stroke="#d8d8d8" stroke-width="1.1"/><path d="M9.8,11 l3.4,0 l-1.7,2.2z" fill="#d0d0d0"/></svg>
<div class="abs sep" style="left:298px;top:391px;height:13px"></div>
<svg class="abs" style="left:306.5px;top:391.5px" width="14" height="14" viewBox="0 0 14 14"><circle cx="6.5" cy="3.3" r="2.9" fill="#e81c24"/><circle cx="3.6" cy="7" r="2.9" fill="#19c434"/><circle cx="9.2" cy="7" r="2.9" fill="#3c63ee"/><path d="M8.6,10.6 l3.2,0 l-1.6,2z" fill="#e0e0e0"/></svg>
<svg class="abs" style="left:327.5px;top:392px" width="12" height="12" viewBox="0 0 12 12"><circle cx="5.8" cy="5.8" r="5" fill="#cfcfcf"/><g stroke="#1e1e1e" stroke-width="1" fill="none"><path d="M5.8,0.8 L7.2,5 M10.4,3.6 L6.6,6.4 M9.6,9.2 L5.4,7.4 M4.6,10.6 L4.6,6 M1,7.2 L5,4.8 M2.4,2.4 L6.6,3.8"/></g><circle cx="5.8" cy="5.8" r="1.6" fill="#1e1e1e"/></svg>
<div class="abs txt" style="left:345.8px;top:394px;font-size:9.5px;color:#2f8dec;letter-spacing:-0.3px">+0.0</div>
<div class="abs sep" style="left:380px;top:391px;height:13px"></div>
<svg class="abs" style="left:389.5px;top:393px" width="13" height="11" viewBox="0 0 13 11"><path d="M0.4,2.6 h3 l1,-1.8 h4 l1,1.8 h3.2 v7.6 h-12.2z" fill="#cdcdcd"/><circle cx="6.4" cy="6.2" r="2.5" fill="#1e1e1e"/><circle cx="6.4" cy="6.2" r="1.2" fill="#cdcdcd"/></svg>
<svg class="abs" style="left:409.5px;top:392px" width="13" height="12" viewBox="0 0 13 12"><path d="M0.6,7.4 q5.2,-6 10.6,0 q-5.4,5.6 -10.6,0z" fill="none" stroke="#7c7c7c" stroke-width="1.2"/><circle cx="5.9" cy="7.4" r="1.9" fill="#7c7c7c"/><path d="M7.4,2.2 h1 l0.5,-1 h2 l0.5,1 h1 v3 h-1.6" fill="none" stroke="#7c7c7c" stroke-width="0.9"/></svg>
<div class="abs sep" style="left:431.7px;top:391px;height:13px"></div>
<div class="abs" style="left:439.8px;top:390.6px;width:56px;height:15px;background:#131313;border-radius:3px;box-shadow:inset 0 0 0 1px #2b2b2b"></div>
<div class="abs txt" style="left:447px;top:393.7px;font-size:9.5px;color:#d0d0d0;letter-spacing:-0.35px">0;00;01;13</div>
<div class="abs sep" style="left:504.3px;top:391px;height:13px"></div>

<!-- timeline panel -->
<div class="abs" style="left:0;top:412.5px;width:612px;height:200px;background:#1f1f1f"></div>
<div class="abs txt" style="left:-6.2px;top:415.5px;font-size:10px;color:#e4e4e4;font-weight:bold;letter-spacing:-0.2px">now</div>
<div class="abs" style="left:23px;top:418.2px;width:7px;height:1.4px;background:#9c9c9c"></div>
<div class="abs" style="left:23px;top:420.8px;width:7px;height:1.2px;background:#9c9c9c"></div>
<div class="abs" style="left:23px;top:423.3px;width:7px;height:1.8px;background:#9c9c9c"></div>
<div class="abs" style="left:0;top:428.8px;width:30px;height:1.9px;background:#b4b4b4"></div>
<!-- search box -->
<div class="abs" style="left:-4px;top:437.5px;width:38.5px;height:15.5px;background:#141414;border-radius:3.5px;box-shadow:inset 0 0 0 1px #2d2d2d"></div>
<!-- timeline icons -->
<svg class="abs" style="left:44px;top:440px" width="16" height="13" viewBox="0 0 16 13"><g fill="#d2d2d2"><rect x="0.6" y="1.6" width="5.2" height="2.6" rx="1"/><rect x="9.6" y="1.2" width="4.6" height="2.6"/><rect x="9.6" y="5.8" width="4.6" height="2.6"/></g><path d="M5.6,2.9 h4 M7.6,2.9 v4.2 h2" fill="none" stroke="#d2d2d2" stroke-width="1"/><path d="M11,9.8 l3.2,0 l-1.6,2z" fill="#d2d2d2"/></svg>
<svg class="abs" style="left:64.5px;top:440px" width="14" height="12" viewBox="0 0 14 12"><rect x="0.6" y="6.4" width="12.6" height="4.6" fill="#5a5a5a"/><path d="M2,5.4 a4.8,4.6 0 0 1 9.6,0z" fill="#d6d6d6"/><rect x="5.8" y="4.6" width="2.2" height="4.6" fill="#d6d6d6"/><circle cx="4.6" cy="3.2" r="0.8" fill="#333"/><circle cx="9" cy="3.2" r="0.8" fill="#333"/></svg>
<svg class="abs" style="left:84.5px;top:439.5px" width="14" height="13" viewBox="0 0 14 13"><path d="M1,3.4 v8.4 h7.4" fill="none" stroke="#c8c8c8" stroke-width="1.1"/><path d="M2.8,2 v8 h7.4" fill="none" stroke="#c8c8c8" stroke-width="1.1"/><rect x="4.8" y="0.8" width="7.6" height="8" fill="#8a8a8a" stroke="#d6d6d6" stroke-width="1.1"/><path d="M6.4,3h4.4 M6.4,5h4.4 M6.4,7h4.4" stroke="#2a2a2a" stroke-width="0.8"/></svg>
<svg class="abs" style="left:104.5px;top:439.5px" width="14" height="13" viewBox="0 0 14 13"><circle cx="5" cy="7.6" r="4.2" fill="none" stroke="#c4c4c4" stroke-width="1"/><circle cx="6.4" cy="6.4" r="4.2" fill="#1d1d1d" stroke="#c4c4c4" stroke-width="1"/><circle cx="8" cy="5.2" r="4.2" fill="#6a6a6a" stroke="#d8d8d8" stroke-width="1.1"/></svg>
<svg class="abs" style="left:124px;top:439px" width="15" height="13" viewBox="0 0 15 13"><rect x="1.2" y="2.2" width="12" height="9.6" rx="1" fill="none" stroke="#d4d4d4" stroke-width="1.1"/><path d="M2.6,4.2 C7,4 7.4,10 12,9.8" fill="none" stroke="#d4d4d4" stroke-width="1.1"/><path d="M3.6,0.6v1.6 M7.2,0.6v1.6 M10.8,0.6v1.6" stroke="#d4d4d4" stroke-width="0.9"/></svg>

<!-- header row -->
<div class="abs" style="left:0;top:460.2px;width:148px;height:1px;background:#141414"></div>
<div class="abs" style="left:0;top:461px;width:148px;height:14.5px;background:#1e1e1e"></div>
<div class="abs" style="left:0;top:475.3px;width:148px;height:1.2px;background:#101010"></div>
<svg class="abs" style="left:2px;top:464px" width="10" height="10" viewBox="0 0 10 10"><circle cx="4.7" cy="4.8" r="3.9" fill="#1f1f1f" stroke="#cdcdcd" stroke-width="1"/><path d="M7.6,2 A4,4 0 0 1 1.9,7.7z" fill="#cdcdcd"/></svg>
<svg class="abs" style="left:14.5px;top:464px" width="10" height="10" viewBox="0 0 10 10"><circle cx="4.6" cy="4.5" r="3.6" fill="none" stroke="#c0c0c0" stroke-width="1"/><path d="M4.6,4.6 v3.4 M4.6,4.6 L1.8,3 M4.6,4.6 L7.4,3" stroke="#c0c0c0" stroke-width="0.9" fill="none"/></svg>
<div class="abs" style="left:37.6px;top:464px;width:1.5px;height:9px;background:#0c0c0c"></div>
<div class="abs txt" style="left:43.3px;top:464.6px;font-size:8px;color:#c6c6c6;letter-spacing:-0.15px">Parent &amp; Link</div>
<div class="abs" style="left:134.3px;top:464px;width:1.6px;height:9px;background:#0c0c0c"></div>

<div class="abs" style="left:0;top:476.5px;width:148px;height:13px;background:#333333"></div>
<div class="abs" style="left:0;top:489.5px;width:148px;height:1.5px;background:#1c1c1c"></div>
<div class="abs" style="left:1.3px;top:477.8px;width:9.8px;height:9.6px;background:#191919"></div>
<div class="abs" style="left:13.6px;top:477.8px;width:9.8px;height:9.6px;background:#191919"></div>
<svg class="abs" style="left:42.5px;top:477.5px" width="12" height="11" viewBox="0 0 12 11"><path d="M8.5,0.7 L9.6,2.1 L10.3,3.7 L10.5,5.5 L10.1,7.2 L9.3,8.7 L8.2,9.8 L6.8,10.4 L5.4,10.6 L4.0,10.2 L2.8,9.5 L1.9,8.4 L1.4,7.1 L1.3,5.7 L1.5,4.4 L2.2,3.2 L3.1,2.4 L4.1,1.9 L5.2,1.8 L6.3,2.1 L7.2,2.7 L7.8,3.6 L8.2,4.5 L8.2,5.5 L8.0,6.5 L7.5,7.3 L6.8,7.8 L6.1,8.1 L5.3,8.1 L4.6,7.9 L4.1,7.5 L3.7,6.9 L3.5,6.3 L3.5,5.6 L3.7,5.1 L4.0,4.6 L4.4,4.3 L4.9,4.2 L5.3,4.3 L5.6,4.5 L5.9,4.7" fill="none" stroke="#b0b0b0" stroke-width="0.95" stroke-linecap="round" stroke-linejoin="round"/></svg>
<div class="abs" style="left:58px;top:477.6px;width:73.5px;height:11.2px;background:#000;border-radius:3px"></div>
<div class="abs txt" style="left:64.4px;top:479px;font-size:9.5px;color:#e2e2e2;letter-spacing:0.15px">None</div>
<svg class="abs" style="left:117px;top:480.6px" width="9" height="6" viewBox="0 0 9 6"><polyline points="0.8,0.8 4.3,4.2 7.8,0.8" fill="none" stroke="#ececec" stroke-width="1.4"/></svg>
<div class="abs" style="left:0;top:490.5px;width:148px;height:13px;background:#303030"></div>
<div class="abs" style="left:0;top:503.5px;width:148px;height:1.5px;background:#1c1c1c"></div>
<div class="abs" style="left:1.3px;top:491.8px;width:9.8px;height:9.6px;background:#191919"></div>
<div class="abs" style="left:13.6px;top:491.8px;width:9.8px;height:9.6px;background:#191919"></div>
<svg class="abs" style="left:42.5px;top:491.5px" width="12" height="11" viewBox="0 0 12 11"><path d="M8.5,0.7 L9.6,2.1 L10.3,3.7 L10.5,5.5 L10.1,7.2 L9.3,8.7 L8.2,9.8 L6.8,10.4 L5.4,10.6 L4.0,10.2 L2.8,9.5 L1.9,8.4 L1.4,7.1 L1.3,5.7 L1.5,4.4 L2.2,3.2 L3.1,2.4 L4.1,1.9 L5.2,1.8 L6.3,2.1 L7.2,2.7 L7.8,3.6 L8.2,4.5 L8.2,5.5 L8.0,6.5 L7.5,7.3 L6.8,7.8 L6.1,8.1 L5.3,8.1 L4.6,7.9 L4.1,7.5 L3.7,6.9 L3.5,6.3 L3.5,5.6 L3.7,5.1 L4.0,4.6 L4.4,4.3 L4.9,4.2 L5.3,4.3 L5.6,4.5 L5.9,4.7" fill="none" stroke="#b0b0b0" stroke-width="0.95" stroke-linecap="round" stroke-linejoin="round"/></svg>
<div class="abs" style="left:58px;top:491.6px;width:73.5px;height:11.2px;background:#000;border-radius:3px"></div>
<div class="abs txt" style="left:64.4px;top:493px;font-size:9.5px;color:#e2e2e2;letter-spacing:0.15px">None</div>
<svg class="abs" style="left:117px;top:494.6px" width="9" height="6" viewBox="0 0 9 6"><polyline points="0.8,0.8 4.3,4.2 7.8,0.8" fill="none" stroke="#ececec" stroke-width="1.4"/></svg>
<div class="abs" style="left:0;top:504.5px;width:148px;height:13px;background:#303030"></div>
<div class="abs" style="left:0;top:517.5px;width:148px;height:1.5px;background:#1c1c1c"></div>
<div class="abs" style="left:1.3px;top:505.8px;width:9.8px;height:9.6px;background:#191919"></div>
<div class="abs" style="left:13.6px;top:505.8px;width:9.8px;height:9.6px;background:#191919"></div>
<svg class="abs" style="left:42.5px;top:505.5px" width="12" height="11" viewBox="0 0 12 11"><path d="M8.5,0.7 L9.6,2.1 L10.3,3.7 L10.5,5.5 L10.1,7.2 L9.3,8.7 L8.2,9.8 L6.8,10.4 L5.4,10.6 L4.0,10.2 L2.8,9.5 L1.9,8.4 L1.4,7.1 L1.3,5.7 L1.5,4.4 L2.2,3.2 L3.1,2.4 L4.1,1.9 L5.2,1.8 L6.3,2.1 L7.2,2.7 L7.8,3.6 L8.2,4.5 L8.2,5.5 L8.0,6.5 L7.5,7.3 L6.8,7.8 L6.1,8.1 L5.3,8.1 L4.6,7.9 L4.1,7.5 L3.7,6.9 L3.5,6.3 L3.5,5.6 L3.7,5.1 L4.0,4.6 L4.4,4.3 L4.9,4.2 L5.3,4.3 L5.6,4.5 L5.9,4.7" fill="none" stroke="#b0b0b0" stroke-width="0.95" stroke-linecap="round" stroke-linejoin="round"/></svg>
<div class="abs" style="left:58px;top:505.6px;width:73.5px;height:11.2px;background:#000;border-radius:3px"></div>
<div class="abs txt" style="left:64.4px;top:507px;font-size:9.5px;color:#e2e2e2;letter-spacing:0.15px">None</div>
<svg class="abs" style="left:117px;top:508.6px" width="9" height="6" viewBox="0 0 9 6"><polyline points="0.8,0.8 4.3,4.2 7.8,0.8" fill="none" stroke="#ececec" stroke-width="1.4"/></svg>
<div class="abs" style="left:0;top:518.5px;width:148px;height:13px;background:#303030"></div>
<div class="abs" style="left:0;top:531.5px;width:148px;height:1.5px;background:#1c1c1c"></div>
<div class="abs" style="left:1.3px;top:519.8px;width:9.8px;height:9.6px;background:#191919"></div>
<div class="abs" style="left:13.6px;top:519.8px;width:9.8px;height:9.6px;background:#191919"></div>
<svg class="abs" style="left:42.5px;top:519.5px" width="12" height="11" viewBox="0 0 12 11"><path d="M8.5,0.7 L9.6,2.1 L10.3,3.7 L10.5,5.5 L10.1,7.2 L9.3,8.7 L8.2,9.8 L6.8,10.4 L5.4,10.6 L4.0,10.2 L2.8,9.5 L1.9,8.4 L1.4,7.1 L1.3,5.7 L1.5,4.4 L2.2,3.2 L3.1,2.4 L4.1,1.9 L5.2,1.8 L6.3,2.1 L7.2,2.7 L7.8,3.6 L8.2,4.5 L8.2,5.5 L8.0,6.5 L7.5,7.3 L6.8,7.8 L6.1,8.1 L5.3,8.1 L4.6,7.9 L4.1,7.5 L3.7,6.9 L3.5,6.3 L3.5,5.6 L3.7,5.1 L4.0,4.6 L4.4,4.3 L4.9,4.2 L5.3,4.3 L5.6,4.5 L5.9,4.7" fill="none" stroke="#b0b0b0" stroke-width="0.95" stroke-linecap="round" stroke-linejoin="round"/></svg>
<div class="abs" style="left:58px;top:519.6px;width:73.5px;height:11.2px;background:#000;border-radius:3px"></div>
<div class="abs txt" style="left:64.4px;top:521px;font-size:9.5px;color:#e2e2e2;letter-spacing:0.15px">None</div>
<svg class="abs" style="left:117px;top:522.6px" width="9" height="6" viewBox="0 0 9 6"><polyline points="0.8,0.8 4.3,4.2 7.8,0.8" fill="none" stroke="#ececec" stroke-width="1.4"/></svg>
<div class="abs" style="left:0;top:532.5px;width:148px;height:13px;background:#303030"></div>
<div class="abs" style="left:0;top:545.5px;width:148px;height:1.5px;background:#1c1c1c"></div>
<div class="abs" style="left:1.3px;top:533.8px;width:9.8px;height:9.6px;background:#191919"></div>
<div class="abs" style="left:13.6px;top:533.8px;width:9.8px;height:9.6px;background:#191919"></div>
<svg class="abs" style="left:42.5px;top:533.5px" width="12" height="11" viewBox="0 0 12 11"><path d="M8.5,0.7 L9.6,2.1 L10.3,3.7 L10.5,5.5 L10.1,7.2 L9.3,8.7 L8.2,9.8 L6.8,10.4 L5.4,10.6 L4.0,10.2 L2.8,9.5 L1.9,8.4 L1.4,7.1 L1.3,5.7 L1.5,4.4 L2.2,3.2 L3.1,2.4 L4.1,1.9 L5.2,1.8 L6.3,2.1 L7.2,2.7 L7.8,3.6 L8.2,4.5 L8.2,5.5 L8.0,6.5 L7.5,7.3 L6.8,7.8 L6.1,8.1 L5.3,8.1 L4.6,7.9 L4.1,7.5 L3.7,6.9 L3.5,6.3 L3.5,5.6 L3.7,5.1 L4.0,4.6 L4.4,4.3 L4.9,4.2 L5.3,4.3 L5.6,4.5 L5.9,4.7" fill="none" stroke="#b0b0b0" stroke-width="0.95" stroke-linecap="round" stroke-linejoin="round"/></svg>
<div class="abs" style="left:58px;top:533.6px;width:73.5px;height:11.2px;background:#000;border-radius:3px"></div>
<div class="abs txt" style="left:64.4px;top:535px;font-size:9.5px;color:#e2e2e2;letter-spacing:0.15px">None</div>
<svg class="abs" style="left:117px;top:536.6px" width="9" height="6" viewBox="0 0 9 6"><polyline points="0.8,0.8 4.3,4.2 7.8,0.8" fill="none" stroke="#ececec" stroke-width="1.4"/></svg>
<div class="abs" style="left:0;top:546.5px;width:148px;height:13px;background:#303030"></div>
<div class="abs" style="left:0;top:559.5px;width:148px;height:1.5px;background:#1c1c1c"></div>
<div class="abs" style="left:1.3px;top:547.8px;width:9.8px;height:9.6px;background:#191919"></div>
<div class="abs" style="left:13.6px;top:547.8px;width:9.8px;height:9.6px;background:#191919"></div>
<svg class="abs" style="left:42.5px;top:547.5px" width="12" height="11" viewBox="0 0 12 11"><path d="M8.5,0.7 L9.6,2.1 L10.3,3.7 L10.5,5.5 L10.1,7.2 L9.3,8.7 L8.2,9.8 L6.8,10.4 L5.4,10.6 L4.0,10.2 L2.8,9.5 L1.9,8.4 L1.4,7.1 L1.3,5.7 L1.5,4.4 L2.2,3.2 L3.1,2.4 L4.1,1.9 L5.2,1.8 L6.3,2.1 L7.2,2.7 L7.8,3.6 L8.2,4.5 L8.2,5.5 L8.0,6.5 L7.5,7.3 L6.8,7.8 L6.1,8.1 L5.3,8.1 L4.6,7.9 L4.1,7.5 L3.7,6.9 L3.5,6.3 L3.5,5.6 L3.7,5.1 L4.0,4.6 L4.4,4.3 L4.9,4.2 L5.3,4.3 L5.6,4.5 L5.9,4.7" fill="none" stroke="#b0b0b0" stroke-width="0.95" stroke-linecap="round" stroke-linejoin="round"/></svg>
<div class="abs" style="left:58px;top:547.6px;width:73.5px;height:11.2px;background:#000;border-radius:3px"></div>
<div class="abs txt" style="left:64.4px;top:549px;font-size:9.5px;color:#e2e2e2;letter-spacing:0.15px">None</div>
<svg class="abs" style="left:117px;top:550.6px" width="9" height="6" viewBox="0 0 9 6"><polyline points="0.8,0.8 4.3,4.2 7.8,0.8" fill="none" stroke="#ececec" stroke-width="1.4"/></svg>
<div class="abs" style="left:0;top:560.5px;width:148px;height:13px;background:#303030"></div>
<div class="abs" style="left:0;top:573.5px;width:148px;height:1.5px;background:#1c1c1c"></div>
<div class="abs" style="left:1.3px;top:561.8px;width:9.8px;height:9.6px;background:#191919"></div>
<div class="abs" style="left:13.6px;top:561.8px;width:9.8px;height:9.6px;background:#191919"></div>
<svg class="abs" style="left:42.5px;top:561.5px" width="12" height="11" viewBox="0 0 12 11"><path d="M8.5,0.7 L9.6,2.1 L10.3,3.7 L10.5,5.5 L10.1,7.2 L9.3,8.7 L8.2,9.8 L6.8,10.4 L5.4,10.6 L4.0,10.2 L2.8,9.5 L1.9,8.4 L1.4,7.1 L1.3,5.7 L1.5,4.4 L2.2,3.2 L3.1,2.4 L4.1,1.9 L5.2,1.8 L6.3,2.1 L7.2,2.7 L7.8,3.6 L8.2,4.5 L8.2,5.5 L8.0,6.5 L7.5,7.3 L6.8,7.8 L6.1,8.1 L5.3,8.1 L4.6,7.9 L4.1,7.5 L3.7,6.9 L3.5,6.3 L3.5,5.6 L3.7,5.1 L4.0,4.6 L4.4,4.3 L4.9,4.2 L5.3,4.3 L5.6,4.5 L5.9,4.7" fill="none" stroke="#b0b0b0" stroke-width="0.95" stroke-linecap="round" stroke-linejoin="round"/></svg>
<div class="abs" style="left:58px;top:561.6px;width:73.5px;height:11.2px;background:#000;border-radius:3px"></div>
<div class="abs txt" style="left:64.4px;top:563px;font-size:9.5px;color:#e2e2e2;letter-spacing:0.15px">None</div>
<svg class="abs" style="left:117px;top:564.6px" width="9" height="6" viewBox="0 0 9 6"><polyline points="0.8,0.8 4.3,4.2 7.8,0.8" fill="none" stroke="#ececec" stroke-width="1.4"/></svg>
<div class="abs" style="left:148px;top:412.5px;width:1.6px;height:195px;background:#0a0a0a"></div>
<div class="abs" style="left:149.6px;top:476px;width:462.4px;height:131px;background:#262626"></div>
<div class="abs" style="left:149.6px;top:434.8px;width:462.4px;height:1.2px;background:#111"></div>
<div class="abs" style="left:154.7px;top:436px;width:458px;height:6.6px;background:#5c5c5c"></div>
<div class="abs" style="left:149.4px;top:436px;width:4.8px;height:6.6px;background:#2d9bf5;border-radius:4px 0 0 4px"></div>
<div class="abs" style="left:149.6px;top:442.6px;width:462.4px;height:1px;background:#0f0f0f"></div>
<div class="abs" style="left:149.6px;top:443.6px;width:462.4px;height:15.4px;background:#1c1c1c;overflow:hidden">
<div class="txt" style="position:absolute;left:-12.3px;width:40px;text-align:center;top:2.4px;font-size:8.2px;color:#cacaca;letter-spacing:-0.2px">0:00f</div>
<div style="position:absolute;left:5.2px;top:9.0px;width:1.1px;height:6.4px;background:#b0b0b0"></div>
<div class="txt" style="position:absolute;left:28.1px;width:40px;text-align:center;top:2.4px;font-size:8.2px;color:#cacaca;letter-spacing:-0.2px">10f</div>
<div style="position:absolute;left:48.2px;top:11.8px;width:1.1px;height:3.6px;background:#b0b0b0"></div>
<div class="txt" style="position:absolute;left:71.1px;width:40px;text-align:center;top:2.4px;font-size:8.2px;color:#cacaca;letter-spacing:-0.2px">20f</div>
<div style="position:absolute;left:91.2px;top:11.8px;width:1.1px;height:3.6px;background:#b0b0b0"></div>
<div class="txt" style="position:absolute;left:114.1px;width:40px;text-align:center;top:2.4px;font-size:8.2px;color:#cacaca;letter-spacing:-0.2px">01:00f</div>
<div style="position:absolute;left:134.2px;top:9.0px;width:1.1px;height:6.4px;background:#b0b0b0"></div>
<div class="txt" style="position:absolute;left:157.1px;width:40px;text-align:center;top:2.4px;font-size:8.2px;color:#cacaca;letter-spacing:-0.2px">10f</div>
<div style="position:absolute;left:177.2px;top:11.8px;width:1.1px;height:3.6px;background:#b0b0b0"></div>
<div class="txt" style="position:absolute;left:200.1px;width:40px;text-align:center;top:2.4px;font-size:8.2px;color:#cacaca;letter-spacing:-0.2px">20f</div>
<div style="position:absolute;left:220.2px;top:11.8px;width:1.1px;height:3.6px;background:#b0b0b0"></div>
<div class="txt" style="position:absolute;left:243.1px;width:40px;text-align:center;top:2.4px;font-size:8.2px;color:#cacaca;letter-spacing:-0.2px">02:00f</div>
<div style="position:absolute;left:263.2px;top:9.0px;width:1.1px;height:6.4px;background:#b0b0b0"></div>
<div class="txt" style="position:absolute;left:286.1px;width:40px;text-align:center;top:2.4px;font-size:8.2px;color:#cacaca;letter-spacing:-0.2px">10f</div>
<div style="position:absolute;left:306.2px;top:11.8px;width:1.1px;height:3.6px;background:#b0b0b0"></div>
<div class="txt" style="position:absolute;left:329.1px;width:40px;text-align:center;top:2.4px;font-size:8.2px;color:#cacaca;letter-spacing:-0.2px">20f</div>
<div style="position:absolute;left:349.2px;top:11.8px;width:1.1px;height:3.6px;background:#b0b0b0"></div>
<div class="txt" style="position:absolute;left:372.1px;width:40px;text-align:center;top:2.4px;font-size:8.2px;color:#cacaca;letter-spacing:-0.2px">03:00f</div>
<div style="position:absolute;left:392.2px;top:9.0px;width:1.1px;height:6.4px;background:#b0b0b0"></div>
<div class="txt" style="position:absolute;left:415.1px;width:40px;text-align:center;top:2.4px;font-size:8.2px;color:#cacaca;letter-spacing:-0.2px">10f</div>
<div style="position:absolute;left:435.2px;top:11.8px;width:1.1px;height:3.6px;background:#b0b0b0"></div>
</div>
<div class="abs" style="left:149.6px;top:459px;width:462.4px;height:1px;background:#0a0a0a"></div>
<div class="abs" style="left:154.7px;top:460.2px;width:458px;height:10.6px;background:#4d4d4d"></div>
<div class="abs" style="left:154.7px;top:460.2px;width:458px;height:3.2px;background:#595959"></div>
<div class="abs" style="left:149.4px;top:460.2px;width:4.8px;height:10.8px;background:#2d9bf5;border-radius:4px 0 0 4px"></div>
<div class="abs" style="left:149.6px;top:470.8px;width:462.4px;height:1.8px;background:#150e15"></div>
<div class="abs" style="left:154.7px;top:472.6px;width:458px;height:3.4px;background:#00e400"></div>
<div class="abs" style="left:149.6px;top:476px;width:462.4px;height:1px;background:#1a1a1a"></div>
<div class="abs" style="left:149.6px;top:476px;width:5.4px;height:131px;background:#292929"></div>
<div class="abs" style="left:149.6px;top:476px;width:5.4px;height:99px;background:#2c2c2c"></div>
<div class="abs" style="left:155px;top:477px;width:457px;height:12.6px;background:#6b6d80"></div>
<div class="abs" style="left:149.6px;top:489.6px;width:462.4px;height:1.4px;background:#1b1314"></div>
<div class="abs" style="left:155px;top:491px;width:457px;height:12.6px;background:#763839"></div>
<div class="abs" style="left:149.6px;top:503.6px;width:462.4px;height:1.4px;background:#1b1314"></div>
<div class="abs" style="left:155px;top:505px;width:457px;height:12.6px;background:#763839"></div>
<div class="abs" style="left:149.6px;top:517.6px;width:462.4px;height:1.4px;background:#1b1314"></div>
<div class="abs" style="left:155px;top:519px;width:457px;height:12.6px;background:#763839"></div>
<div class="abs" style="left:149.6px;top:531.6px;width:462.4px;height:1.4px;background:#1b1314"></div>
<div class="abs" style="left:155px;top:533px;width:457px;height:12.6px;background:#763839"></div>
<div class="abs" style="left:149.6px;top:545.6px;width:462.4px;height:1.4px;background:#1b1314"></div>
<div class="abs" style="left:155px;top:547px;width:457px;height:12.6px;background:#763839"></div>
<div class="abs" style="left:149.6px;top:559.6px;width:462.4px;height:1.4px;background:#1b1314"></div>
<div class="abs" style="left:155px;top:561px;width:457px;height:12.6px;background:#763839"></div>
<div class="abs" style="left:149.6px;top:573.6px;width:462.4px;height:1.4px;background:#1b1314"></div>
<div class="abs" style="left:339.8px;top:436px;width:1.1px;height:170.5px;background:#3a8de8"></div>
<svg class="abs" style="left:335.5px;top:447px" width="10" height="12" viewBox="0 0 10 12"><path d="M0.5,0.6 h9 v5.2 l-4.5,5.4 l-4.5,-5.4z" fill="#3e90ea"/><rect x="4.3" y="5" width="1.1" height="4" fill="#1d3d66"/></svg>
<div class="abs" style="left:0;top:606.5px;width:238px;height:1.9px;background:#070707"></div>
<div class="abs" style="left:0;top:608.4px;width:238px;height:4px;background:#202020"></div>
<div class="abs" style="left:238px;top:605px;width:374px;height:7px;background:#1e1e1e"></div>
<div class="abs" style="left:3.6px;top:610.8px;width:1.6px;height:1.5px;background:#8a8a8a"></div>
<div class="abs" style="left:9.2px;top:610.8px;width:1.6px;height:1.5px;background:#8a8a8a"></div>
<div class="abs" style="left:19.8px;top:610.8px;width:1.6px;height:1.5px;background:#8a8a8a"></div>
<div class="abs" style="left:169px;top:610px;width:6.5px;height:6.5px;border-radius:50%;background:#d0d0d0"></div>
</div>
</body></html>
